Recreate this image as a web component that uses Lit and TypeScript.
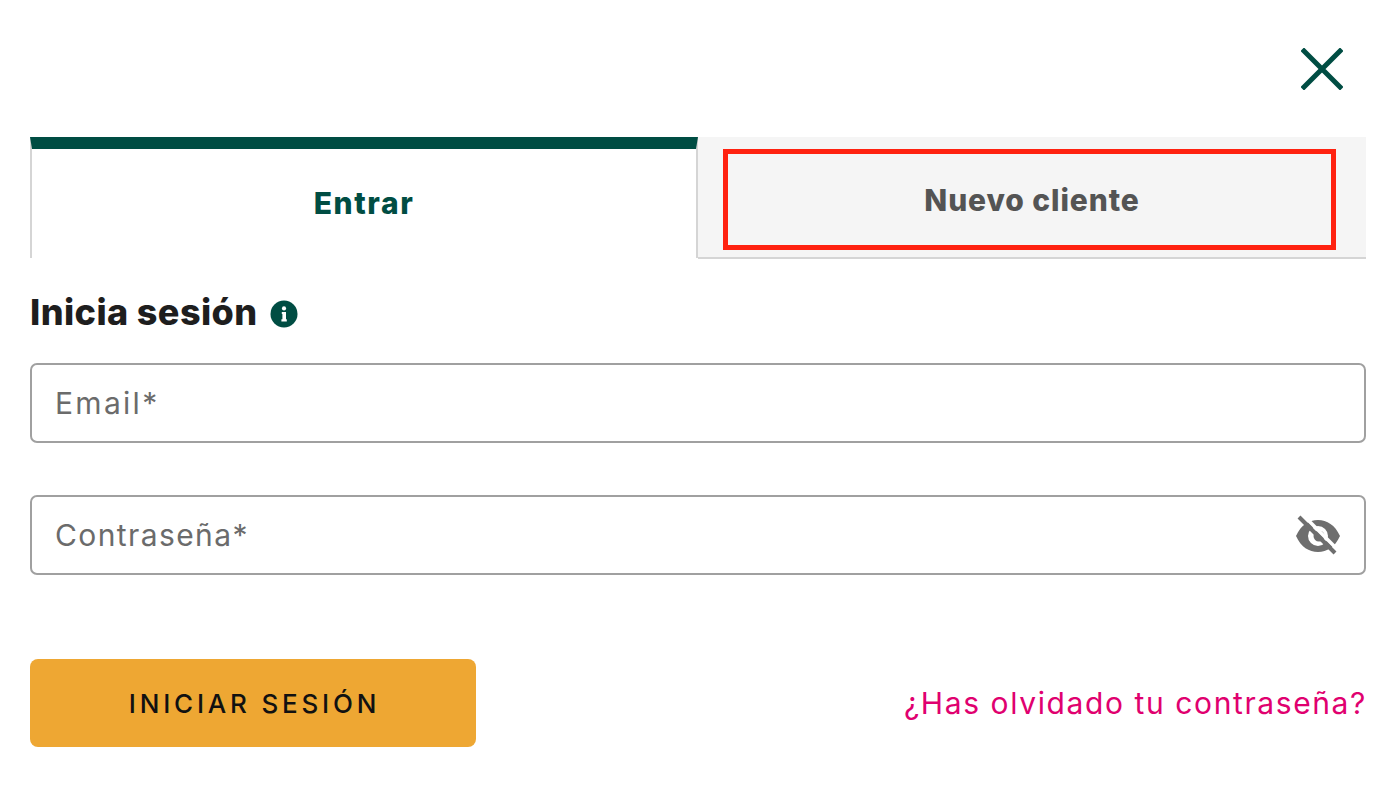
import { LitElement, html, css } from "lit";
import { customElement } from "lit/decorators.js";

@customElement("app-root")
export class AppRoot extends LitElement {
  static styles = css`
    :host { display: block; width: 1388px; height: 794px; background: #fff; font-family: Inter, "Noto Sans", sans-serif; overflow: hidden; }
    .page { display: flex; flex-direction: column; padding: 0 22px 0 30px; }
    .top { display: flex; justify-content: flex-end; height: 137px; padding: 48px 23px 0 0; box-sizing: border-box; }
    .close { width: 42px; height: 42px; display: block; }
    .tabs { display: grid; grid-template-columns: 668px 668px; height: 122px; }
    .tab-on { border-top: 12px solid #004d43; border-left: 2px solid #d5d5d5; border-right: 2px solid #d5d5d5; box-sizing: border-box; height: 121px; padding-bottom: 2px; display: flex; align-items: center; justify-content: center; color: #004d43; font-weight: 800; font-size: 30px; letter-spacing: 1.6px; }
    .tab-off { background: #f5f5f5; border-bottom: 2px solid #d5d5d5; box-sizing: border-box; height: 122px; padding: 12px 30px 7px 25px; }
    .outline { height: 100%; box-sizing: border-box; border: 5px solid #ff2210; padding: 1px 0 0 5px; display: flex; align-items: center; justify-content: center; color: #545454; font-weight: 800; font-size: 30px; letter-spacing: 0.9px; }
    .title { display: flex; align-items: center; gap: 13px; height: 92px; padding-top: 14px; box-sizing: border-box; font-size: 36px; font-weight: 800; color: #1e1e1e; letter-spacing: 0.4px; }
    .info { width: 28px; height: 28px; display: block; margin-top: 3px; }
    .field { width: 1336px; height: 80px; box-sizing: border-box; border: 2px solid #a0a0a0; border-radius: 7px; display: flex; align-items: center; justify-content: space-between; padding: 0 24px 0 23px; font-size: 30px; color: #6b6b6b; font-weight: 400; }
    .email { margin-top: 12px; letter-spacing: 2.3px; }
    .pass { margin-top: 52px; letter-spacing: 1.4px; }
    .eye { width: 46px; height: 46px; display: block; margin-right: -1px; }
    .actions { width: 1336px; display: flex; align-items: center; justify-content: space-between; margin-top: 84px; }
    .btn { width: 446px; height: 88px; box-sizing: border-box; padding-left: 3px; background: #eea733; border-radius: 8px; display: flex; align-items: center; justify-content: center; color: #111; font-size: 26px; font-weight: 500; letter-spacing: 3.8px; }
    .forgot { color: #e0006f; font-size: 30px; font-weight: 400; letter-spacing: 1.6px; margin-right: -1px; }
  `;

  render() {
    return html`<div class="page">
      <div class="top">
        <svg class="close" viewBox="0 0 42 42"><path d="M3 3 L39 39 M39 3 L3 39" stroke="#004d43" stroke-width="5" stroke-linecap="square" fill="none"/></svg>
      </div>
      <div class="tabs">
        <div class="tab-on">Entrar</div>
        <div class="tab-off"><div class="outline">Nuevo cliente</div></div>
      </div>
      <div class="title">Inicia sesión
        <svg class="info" viewBox="0 0 28 28"><circle cx="14" cy="14" r="13.5" fill="#004d43"/><circle cx="14" cy="8.4" r="2.1" fill="#fff"/><path d="M11.8 12 H16 V19.2 H16.8 V21.5 H11.4 V19.2 H12.4 V14 H11.8 Z" fill="#fff"/></svg>
      </div>
      <div class="field email">Email*</div>
      <div class="field pass">Contraseña*
        <svg class="eye" viewBox="0 0 46 46">
          <path fill-rule="evenodd" fill="#6e6e6e" d="M1 24 C6 13 14 8 23 8 C32 8 40 13 45 24 C40 35 32 40 23 40 C14 40 6 35 1 24 Z M23 14 A10 10 0 1 0 23 34 A10 10 0 1 0 23 14 Z"/>
          <circle cx="24" cy="24" r="5.5" fill="#6e6e6e"/>
          <path d="M8 3 L44 39" stroke="#fff" stroke-width="3.5" fill="none"/>
          <path d="M4 5 L40 41" stroke="#6e6e6e" stroke-width="4" fill="none"/>
        </svg>
      </div>
      <div class="actions">
        <div class="btn">INICIAR SESIÓN</div>
        <div class="forgot">¿Has olvidado tu contraseña?</div>
      </div>
    </div>`;
  }
}
